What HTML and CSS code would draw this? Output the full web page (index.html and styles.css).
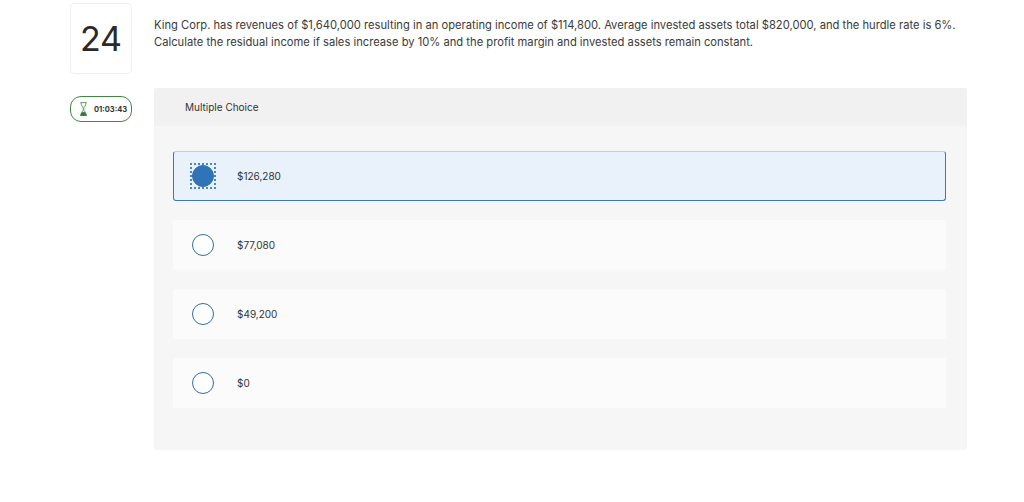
FILE: index.html
```html
<!DOCTYPE html>
<html lang="en">
<head>
<meta charset="utf-8">
<title>Question 24</title>
<link rel="stylesheet" href="styles.css">
</head>
<body>
<main class="page">
  <aside class="side">
    <div class="qnum">24</div>
    <div class="timer">
      <svg class="glass" width="9" height="14" viewBox="0 0 9 14" aria-hidden="true">
        <path d="M1.500.6h6M1.500 13.400h6M2 .6c0 3 2 4.400 2.500 6.400C4 9 2 10.400 2 13.400M7 .6c0 3-2 4.400-2.500 6.400.5 2 2.500 3.400 2.500 6.400" fill="none" stroke="#5c9a5c" stroke-width="1"/>
        <path d="M1.200 13.800c.2-2.300 1.600-3.800 3.300-3.800s3.100 1.500 3.300 3.800z" fill="#2f7f35"/>
      </svg>
      <span class="time">01:03:43</span>
    </div>
  </aside>
  <section class="content">
    <p class="prompt">King Corp. has revenues of $1,640,000 resulting in an operating income of $114,800. Average invested assets total $820,000, and the hurdle rate is 6%. Calculate the residual income if sales increase by 10% and the profit margin and invested assets remain constant.</p>
    <div class="panel">
      <div class="panel-head">Multiple Choice</div>
      <div class="options">
        <div class="option selected"><span class="focus"><span class="radio"></span></span><span class="label">$126,280</span></div>
        <div class="option"><span class="focus"><span class="radio"></span></span><span class="label">$77,080</span></div>
        <div class="option"><span class="focus"><span class="radio"></span></span><span class="label">$49,200</span></div>
        <div class="option"><span class="focus"><span class="radio"></span></span><span class="label">$0</span></div>
      </div>
    </div>
  </section>
</main>
</body>
</html>
```
FILE: styles.css
```css
* { box-sizing: border-box; }
html, body { margin: 0; padding: 0; background: #fff; }
body { font-family: "Inter", "Liberation Sans", sans-serif; color: #2d2d2d; height: 502px; overflow: hidden; }
.page { display: flex; gap: 22px; padding: 3px 0 0 70px; }
.side { width: 62px; flex: none; display: flex; flex-direction: column; gap: 22px; }
.qnum { height: 71px; border: 1px solid #f0f0f0; border-radius: 4px; display: flex; align-items: center; justify-content: center; font-size: 34px; font-weight: 400; color: #2a2a2a; }
.timer { height: 26px; border: 1px solid #3f8a3f; border-radius: 11px; display: flex; align-items: center; gap: 6px; padding-left: 8px; }
.glass { flex: none; }
.time { font-size: 7.5px; font-weight: 700; color: #333; }
.content { width: 813px; flex: none; }
.prompt { margin: 0; height: 85px; padding-top: 14px; font-size: 11.2px; line-height: 17px; color: #3a3a3a; }
.panel { height: 362px; background: #f6f6f6; border-radius: 3px; overflow: hidden; }
.panel-head { height: 38px; background: #f1f1f1; padding-left: 31px; display: flex; align-items: center; font-size: 10px; color: #333; }
.options { display: flex; flex-direction: column; gap: 19px; padding: 25px 21px 0 19px; }
.option { height: 50px; background: #fbfbfb; border-radius: 2px; display: flex; align-items: center; padding-left: 17px; gap: 21px; font-size: 10px; color: #333; }
.option.selected { background: #e9f1fb; border: 1px solid #3a78bd; border-top-color: #b9d0ea; border-radius: 3px; padding-left: 16px; }
.focus { width: 26px; height: 26px; display: flex; align-items: center; justify-content: center; }
.selected .focus { border: 2px dotted #4a86c5; }
.radio { width: 22px; height: 22px; flex: none; border-radius: 50%; background: #fff; border: 1px solid #2f6fa8; }
.selected .radio { background: #2f74b9; }
```
